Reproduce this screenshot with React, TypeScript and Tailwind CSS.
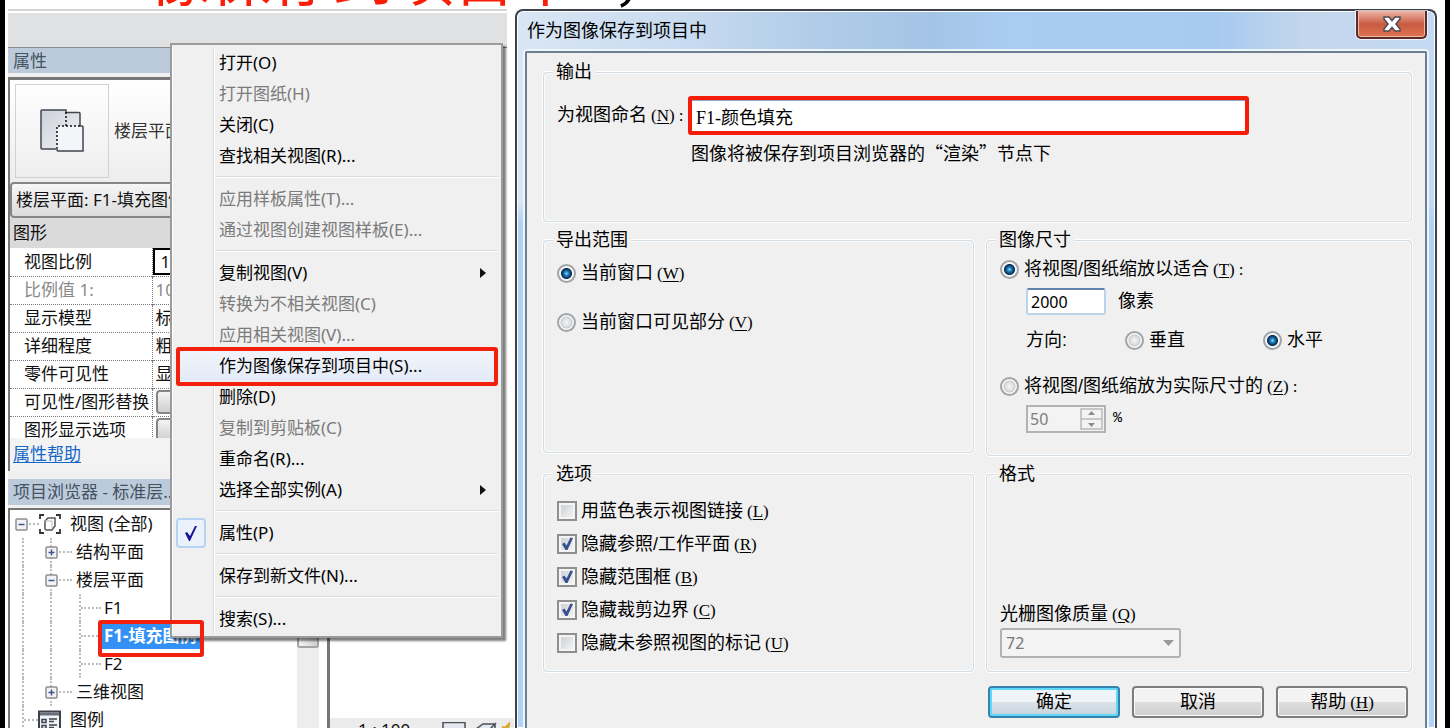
import { Fragment, type ReactNode } from "react";

type MenuEntry = {
  label: string;
  disabled?: boolean;
  submenu?: boolean;
  active?: boolean;
  checked?: boolean;
};

const menuGroups: MenuEntry[][] = [
  [
    { label: "打开(O)" },
    { label: "打开图纸(H)", disabled: true },
    { label: "关闭(C)" },
    { label: "查找相关视图(R)..." },
  ],
  [
    { label: "应用样板属性(T)...", disabled: true },
    { label: "通过视图创建视图样板(E)...", disabled: true },
  ],
  [
    { label: "复制视图(V)", submenu: true },
    { label: "转换为不相关视图(C)", disabled: true },
    { label: "应用相关视图(V)...", disabled: true },
    { label: "作为图像保存到项目中(S)...", active: true },
    { label: "删除(D)" },
    { label: "复制到剪贴板(C)", disabled: true },
    { label: "重命名(R)..." },
    { label: "选择全部实例(A)", submenu: true },
  ],
  [{ label: "属性(P)", checked: true }],
  [{ label: "保存到新文件(N)..." }],
  [{ label: "搜索(S)..." }],
];

const exportOptions = [
  { label: "用蓝色表示视图链接", hotkey: "L", checked: false },
  { label: "隐藏参照/工作平面", hotkey: "R", checked: true },
  { label: "隐藏范围框", hotkey: "B", checked: true },
  { label: "隐藏裁剪边界", hotkey: "C", checked: true },
  { label: "隐藏未参照视图的标记", hotkey: "U", checked: false },
];

const Key = ({ k, colon }: { k: string; colon?: boolean }) => (
  <span className="ml-1 font-['Liberation_Serif',serif] text-[17px] leading-none">
    (<span className="underline underline-offset-2">{k}</span>){colon && <span className="ml-1">:</span>}
  </span>
);

const Group = ({ title, className, children }: { title: string; className: string; children?: ReactNode }) => (
  <fieldset
    className={`min-w-0 rounded-[4px] border border-[#d3dce2] px-[13px] shadow-[0_0_0_1px_#fff,inset_0_0_0_1px_#f8fafb] ${className}`}
  >
    <legend className="-ml-1 bg-[#f0f0f0] px-[3px] leading-5">{title}</legend>
    {children}
  </fieldset>
);

const Radio = ({ name, checked, children }: { name: string; checked?: boolean; children: ReactNode }) => (
  <label className="flex h-5 items-center gap-[5px] leading-5">
    <input
      type="radio"
      name={name}
      defaultChecked={checked}
      className="size-[19px] shrink-0 appearance-none rounded-full border-2 border-[#a2a5a8] bg-[radial-gradient(circle_at_center,#f4f4f4_0,#dcdee0_40%,#c6c9cc_52%,#f8f8f8_60%)] checked:bg-[radial-gradient(circle_at_center,#8fe0fb_0,#2b8fcb_16%,#0b4a7e_36%,#12304e_48%,#f6f8fa_56%)]"
    />
    <span className="whitespace-nowrap">{children}</span>
  </label>
);

const CheckBox = ({ checked, children }: { checked: boolean; children: ReactNode }) => (
  <label className="relative flex h-5 items-center gap-1 leading-5">
    <input
      type="checkbox"
      defaultChecked={checked}
      className="peer size-5 shrink-0 appearance-none border-2 border-[#8e8f8f] bg-linear-to-br from-[#c9cdd2] to-[#f7f7f7] shadow-[inset_0_0_0_2px_#f4f4f4]"
    />
    <svg viewBox="0 0 20 20" className="absolute left-0 hidden size-5 peer-checked:block">
      <path d="M5 10 7.500 8.500l2 3L13.500 3.500l2.500.6L10.500 16H8.500z" fill="#38508f" />
    </svg>
    <span className="whitespace-nowrap">{children}</span>
  </label>
);

const PushButton = ({ primary, children }: { primary?: boolean; children: ReactNode }) => (
  <button
    type="button"
    className={`h-8 w-[132px] rounded-[4px] border-2 bg-linear-to-b text-center leading-5 ${
      primary
        ? "border-[#3583ad] from-[#eef4f8] from-50% via-[#dbe3ea] via-50% to-[#c6d3dd] shadow-[inset_0_0_0_2px_#5fd8fa]"
        : "border-[#7d7d7d] from-[#f3f3f3] from-50% via-[#dedede] via-50% to-[#cfcfcf] shadow-[inset_0_0_0_1px_#fbfbfb]"
    }`}
  >
    {children}
  </button>
);

const ViewIcon = () => (
  <svg viewBox="0 0 44 44" className="size-11" strokeWidth="1.5" stroke="#40454f">
    <defs>
      <linearGradient id="sheet" x1="0" y1="0" x2="1" y2="1">
        <stop offset="0" stopColor="#cdd0da" />
        <stop offset="1" stopColor="#f2f3f6" />
      </linearGradient>
    </defs>
    <path d="M1 1h25v3h14v13H27v23H1z" fill="url(#sheet)" stroke="none" />
    <path d="M16 40H2q-1 0-1-1V2q0-1 1-1h24v2.500h13q1 0 1 1V17" fill="none" />
    <path d="M17 17h25q1 0 1 1v23q0 1-1 1H18q-1 0-1-1z" fill="#f4f5f8" stroke="none" />
    <path d="M40 17h2q1 0 1 1v24H18q-1 0-1-1v-2" fill="none" />
    <path d="M26 3v14M40 17H17v22" fill="none" stroke="#111" strokeDasharray="2 2" />
  </svg>
);

const Expander = ({ open }: { open: boolean }) => (
  <svg viewBox="0 0 13 13" className="absolute top-2 -left-[7px] size-[13px]">
    <rect x="1" y="1" width="11" height="11" rx="1" fill="#f3f3f3" stroke="#8f8f8f" strokeWidth="1.500" />
    <path d={open ? "M3.500 6.500h6" : "M3.500 6.500h6M6.500 3.500v6"} stroke="#3b5494" strokeWidth="1.500" />
  </svg>
);

const Guide = ({ className }: { className: string }) => (
  <div className={`shrink-0 border-l-2 border-dotted border-[#bdbdbd] ${className}`} />
);

const Dash = () => <div className="mt-[13px] w-full border-t-2 border-dotted border-[#bdbdbd]" />;

const TreeGroup = ({ label, open }: { label: string; open: boolean }) => (
  <li className="flex h-7">
    <Guide className="w-7" />
    <div className="relative flex w-[22px] shrink-0 items-start border-l-2 border-dotted border-[#bdbdbd]">
      <Dash />
      <Expander open={open} />
    </div>
    <span className="pl-1">{label}</span>
  </li>
);

const TreeLeaf = ({ label, selected }: { label: string; selected?: boolean }) => (
  <li className="flex h-7 items-stretch">
    <Guide className="w-7" />
    <Guide className="w-[29px]" />
    <div className="flex w-[22px] shrink-0 items-start border-l-2 border-dotted border-[#bdbdbd]">
      <Dash />
    </div>
    {selected ? (
      <span className="my-px bg-[#3390f5] px-[3px] leading-[26px] font-bold whitespace-nowrap text-white">{label}</span>
    ) : (
      <span className="pl-[3px]">{label}</span>
    )}
  </li>
);

const PropertyRow = ({ name, muted, children }: { name: string; muted?: boolean; children: ReactNode }) => (
  <tr className={`h-7 border-b border-dotted border-[#777] ${muted ? "text-[#8a8a8a]" : ""}`}>
    <th scope="row" className="w-[142px] p-0 pl-[14px] text-left font-normal whitespace-nowrap">
      {name}
    </th>
    <td className="border-l border-dotted border-[#777] p-0 pl-[3px]">{children}</td>
  </tr>
);

const PropertiesPanel = () => (
  <section>
    <h2 className="h-[25px] bg-[#bccbdc] pl-[5px] leading-[25px] text-[#46525e]">属性</h2>
    <div className="mt-1 h-[394px] border-t-[3px] border-l-2 border-[#767676] bg-[#f3f3f3]">
      <div className="flex h-[102px] items-center bg-linear-to-b from-white to-[#ededee] pl-[5px]">
        <div className="flex size-[94px] items-center justify-center border border-[#d2d2d2]">
          <ViewIcon />
        </div>
        <span className="pl-[5px] whitespace-nowrap text-[#333]">楼层平面</span>
      </div>
      <select
        aria-label="视图实例"
        className="block h-[36px] w-full appearance-none rounded-[4px] border-2 border-[#858585] bg-linear-to-b from-[#f6f6f6] to-[#dcdcdc] pl-1"
      >
        <option>楼层平面: F1-填充图例</option>
      </select>
      <h3 className="h-[30px] bg-[#dadada] pl-[3px] leading-[30px]">图形</h3>
      <div className="h-[190px] overflow-hidden bg-white">
        <table className="w-full border-collapse leading-[26px]">
          <tbody>
            <PropertyRow name="视图比例">
              <div className="-ml-[3px] border-2 border-black pl-1.5 leading-[23px]">1 : 100</div>
            </PropertyRow>
            <PropertyRow name="比例值 1:" muted>
              100
            </PropertyRow>
            <PropertyRow name="显示模型">标准</PropertyRow>
            <PropertyRow name="详细程度">粗略</PropertyRow>
            <PropertyRow name="零件可见性">显示</PropertyRow>
            <PropertyRow name="可见性/图形替换">
              <button
                type="button"
                aria-label="编辑可见性"
                className="block h-6 w-full rounded-[4px] border-2 border-[#858585] bg-linear-to-b from-[#f4f4f4] to-[#cfcfcf]"
              />
            </PropertyRow>
            <PropertyRow name="图形显示选项">
              <button
                type="button"
                aria-label="编辑显示选项"
                className="block h-6 w-full rounded-[4px] border-2 border-[#858585] bg-linear-to-b from-[#f4f4f4] to-[#cfcfcf]"
              />
            </PropertyRow>
          </tbody>
        </table>
      </div>
      <a href="#help" className="ml-[3px] block leading-8 text-[#1467c9] underline underline-offset-2">
        属性帮助
      </a>
    </div>
  </section>
);

const ProjectBrowser = () => (
  <section className="flex min-h-0 flex-1 flex-col pt-2">
    <h2 className="h-[26px] shrink-0 bg-[#bccbdc] pl-[5px] leading-[26px] text-[#46525e]">项目浏览器 - 标准层...</h2>
    <div className="mt-[3px] flex min-h-0 flex-1 overflow-hidden border-t-2 border-l-2 border-[#767676] bg-white">
      <ul className="flex-1 pl-3 leading-7 whitespace-nowrap">
        <li className="flex h-7">
          <div className="relative flex w-[17px] shrink-0 items-start">
            <Dash />
            <Expander open />
          </div>
          <svg viewBox="0 0 22 22" className="mt-[3px] size-[22px]" fill="none" stroke="#333" strokeWidth="1.800">
            <path d="M1 6V2h4M17 2h4v4M21 16v4h-4M5 20H1v-4" />
            <path d="m6 8 3-3h7v8l-3 4H7l-1-1z" stroke="#555" strokeWidth="1.500" />
            <path d="M6 8h7v8" stroke="#bbb" strokeWidth="1" />
          </svg>
          <span className="pl-[9px]">视图 (全部)</span>
        </li>
        <TreeGroup label="结构平面" open={false} />
        <TreeGroup label="楼层平面" open />
        <TreeLeaf label="F1" />
        <TreeLeaf label="F1-填充图例" selected />
        <TreeLeaf label="F2" />
        <TreeGroup label="三维视图" open={false} />
        <li className="flex h-7">
          <div className="flex w-4 shrink-0 items-start border-l-2 border-dotted border-[#bdbdbd]">
            <Dash />
          </div>
          <svg viewBox="0 0 23 22" className="mt-1 size-[23px]">
            <rect x="1" y="1" width="21" height="20" fill="#f2f3f6" stroke="#3d424c" strokeWidth="2" />
            <path d="M2 2h19v3H2z" fill="#686e7a" />
            <path d="M4 9h4v3H4zM4 15h4v3H4z" fill="none" stroke="#3d424c" strokeWidth="1.500" />
            <path d="M11 8.500h8M11 11h5M11 14.500h8M11 17h5" stroke="#3d424c" strokeWidth="1.500" />
          </svg>
          <span className="pl-[9px]">图例</span>
        </li>
      </ul>
      <div className="mr-2 w-[22px] bg-[#ededed]">
        <div className="h-[138px] rounded-[3px] border-2 border-[#a5a5a5] bg-linear-to-r from-[#f4f4f4] to-[#d2d2d2]" />
      </div>
    </div>
  </section>
);

const ViewBar = () => (
  <div className="flex h-[10px] shrink-0 items-start overflow-hidden bg-[#ececec] pt-1 pl-7 leading-4">
    <span className="w-[84px]">1 : 100</span>
    <svg viewBox="0 0 72 20" className="h-5 w-[72px] shrink-0" fill="#e4e7ee" stroke="#4a4f5a" strokeWidth="1.500">
      <rect x="1" y="0.500" width="22" height="18" />
      <path d="m34 7 7-5h12l-5 5zM34 7h14v10H34zM48 7l5-5v10l-5 5" />
      <path d="m60 5 3 1 4-4-1 5 4 2" stroke="#d9a520" strokeWidth="2" fill="none" />
    </svg>
  </div>
);

const ContextMenu = () => (
  <div
    role="menu"
    className="absolute top-[43px] left-[170px] w-[333px] border-2 border-[#9b9b9b] bg-[#f0f0f0] py-[2px] shadow-[3px_3px_2px_#00000080]"
  >
    <div className="border-l border-white bg-[linear-gradient(to_right,transparent_40px,#dcdcdc_40px,#dcdcdc_41px,#fff_41px,#fff_42px,transparent_42px)] px-[3px]">
      {menuGroups.map((group, i) => (
        <Fragment key={group[0].label}>
          {i > 0 && <hr className="my-[5px] mr-0 ml-[39px] h-[2px] border-t border-b border-t-[#dcdcdc] border-b-white" />}
          {group.map((item) => (
            <button
              key={item.label}
              type="button"
              role="menuitem"
              disabled={item.disabled}
              className={`flex h-[31px] w-full items-center text-left ${item.disabled ? "text-[#7b7b7b]" : "text-black"} ${
                item.active ? "bg-linear-to-b from-[#f2f4f9] to-[#e3ebf8]" : ""
              }`}
            >
              <span className="w-[43px] shrink-0">
                {item.checked && (
                  <svg viewBox="0 0 30 30" className="size-[30px]">
                    <rect x="1" y="1" width="28" height="28" rx="3" fill="#ebf2fb" stroke="#b5d3f3" strokeWidth="2" />
                    <path d="m9 15 2-1 3 4 5-10h2l-7 15h-1z" fill="#15159c" />
                  </svg>
                )}
              </span>
              <span className="flex-1 whitespace-nowrap">{item.label}</span>
              {item.submenu && (
                <svg viewBox="0 0 6 10" className="mr-3 h-[10px] w-1.5">
                  <path d="M0 0v10l6-5z" fill="#111" />
                </svg>
              )}
            </button>
          ))}
        </Fragment>
      ))}
    </div>
  </div>
);

const TitleBar = () => (
  <div className="flex h-10 items-start justify-between pl-[10px]">
    <h1 className="leading-10">作为图像保存到项目中</h1>
    <button
      type="button"
      aria-label="关闭"
      className="mr-2 flex h-7 w-[71px] items-center justify-center rounded-b-[5px] border-2 border-t-0 border-[#5a2a28] bg-linear-to-b from-[#eab5a8] via-[#c95a43] via-50% to-[#dd7350] shadow-[0_0_0_1px_#ffffffb0,inset_0_0_0_1px_#f0b8a8]"
    >
      <svg viewBox="0 0 18 16" className="h-4 w-[18px]">
        <path
          d="M1 1h5l3 3.500L12 1h5v2l-4 5 4 5v2h-5l-3-3.500L6 15H1v-2l4-5-4-5z"
          fill="#fff"
          stroke="#4d4a55"
          strokeWidth="1.500"
        />
      </svg>
    </button>
  </div>
);

const SaveDialog = () => (
  <div
    role="dialog"
    aria-label="作为图像保存到项目中"
    className="mr-2 flex min-w-0 flex-1 flex-col rounded-t-[8px] border-2 border-b-0 border-[#3b424d] bg-[linear-gradient(to_bottom,transparent_190px,#b0d2f6_212px),linear-gradient(to_right,#d9e6f5_0,#c8dbf0_18%,#b2cce8_32%,#a4c4e6_45%,#a9cdf2_54%,#a6caf0_76%,#c3d6ec_86%,#c3daf2_100%)] font-['Liberation_Sans','Noto_Sans_CJK_SC',sans-serif] text-[18px] text-black shadow-[inset_0_0_0_1px_#fff]"
  >
    <TitleBar />
    <div className="mx-2 flex-1 rounded-t-[2px] border-2 border-b-0 border-[#6d7f90] bg-[#f0f0f0] pt-[9px] pr-[13px] pl-4 shadow-[0_0_0_2px_#edf5fd]">
      <form className="grid grid-cols-[430fr_425fr] items-start gap-x-3 gap-y-2">
        <Group title="输出" className="col-span-2 h-40">
          <div className="flex items-center pt-[14px]">
            <label htmlFor="view-name" className="w-[131px] shrink-0 whitespace-nowrap">
              为视图命名
              <Key k="N" colon />
            </label>
            <div className="max-w-[561px] flex-1 rounded-[3px] border-4 border-[#f51d08]">
              <input
                id="view-name"
                defaultValue="F1-颜色填充"
                className="block h-[31px] w-full border-t border-[#8fa9bb] bg-white px-1 font-['Liberation_Serif','Noto_Sans_CJK_SC',serif]"
              />
            </div>
          </div>
          <p className="pt-[7px] pl-[134px] font-['Noto_Sans_CJK_SC',sans-serif] leading-5" lang="zh-CN">
            图像将被保存到项目浏览器的“渲染”节点下
          </p>
        </Group>

        <Group title="导出范围" className="h-[223px]">
          <div className="flex flex-col gap-[29px] pt-[13px]">
            <Radio name="range" checked>
              当前窗口
              <Key k="W" />
            </Radio>
            <Radio name="range">
              当前窗口可见部分
              <Key k="V" />
            </Radio>
          </div>
        </Group>

        <Group title="图像尺寸" className="h-[226px]">
          <div className="pt-[9px]">
            <Radio name="scale" checked>
              将视图/图纸缩放以适合
              <Key k="T" colon />
            </Radio>
            <div className="flex h-9 items-end gap-3 pl-[26px]">
              <input
                id="pixels"
                defaultValue="2000"
                className="h-[27px] w-20 rounded-[3px] border-2 border-[#b9d3ea] border-t-[#5f83ab] bg-white px-[3px] font-['Noto_Sans',sans-serif] text-[16px]"
              />
              <label htmlFor="pixels">像素</label>
            </div>
            <div className="flex items-center pt-[15px] pl-[26px]" role="radiogroup" aria-label="方向">
              <span className="w-[99px] shrink-0 leading-5">方向:</span>
              <div className="w-[138px] shrink-0">
                <Radio name="direction">垂直</Radio>
              </div>
              <Radio name="direction" checked>
                水平
              </Radio>
            </div>
            <div className="pt-[26px]">
              <Radio name="scale">
                将视图/图纸缩放为实际尺寸的
                <Key k="Z" colon />
              </Radio>
            </div>
            <div className="flex items-center gap-[7px] pt-[9px] pl-[26px]">
              <div className="flex h-7 w-20 border-2 border-[#b3b3b3] bg-[#f3f3f3] p-px">
                <input
                  id="percent"
                  defaultValue="50"
                  disabled
                  className="min-w-0 flex-1 px-px font-['Noto_Sans',sans-serif] text-[16px] text-[#7c7c7c]"
                />
                <svg viewBox="0 0 23 22" className="h-[22px] w-[23px]" fill="none" stroke="#b9b9b9" strokeWidth="1.500">
                  <path d="M1 1h21v20H1zM1 11h21" />
                  <path d="m8 7 3.500-4L15 7zM8 15l3.500 4 3.500-4z" fill="#8c8c8c" stroke="none" />
                </svg>
              </div>
              <label htmlFor="percent" className="font-['Liberation_Mono',monospace] text-[15px]">
                %
              </label>
            </div>
          </div>
        </Group>

        <Group title="选项" className="h-[208px]">
          <div className="flex flex-col gap-[13px] pt-[17px]">
            {exportOptions.map((o) => (
              <CheckBox key={o.hotkey} checked={o.checked}>
                {o.label}
                <Key k={o.hotkey} />
              </CheckBox>
            ))}
          </div>
        </Group>

        <Group title="格式" className="h-[208px]">
          <div className="flex h-[187px] flex-col justify-end pb-[13px]">
            <label htmlFor="quality" className="h-6 leading-5">
              光栅图像质量
              <Key k="Q" />
            </label>
            <div className="relative w-[181px]">
              <select
                id="quality"
                disabled
                className="block h-[30px] w-full appearance-none rounded-[3px] border-2 border-[#b0b3b5] bg-[#f4f4f4] pl-1 font-['Noto_Sans',sans-serif] text-[16px] text-[#777] opacity-100"
              >
                <option>72</option>
              </select>
              <svg viewBox="0 0 11 6" className="absolute top-3 right-[7px] h-1.5 w-[11px]">
                <path d="M0 0h11L5.500 6z" fill="#9a9a9a" />
              </svg>
            </div>
          </div>
        </Group>
      </form>
      <div className="flex justify-end gap-3 pt-[14px] pr-1">
        <PushButton primary>确定</PushButton>
        <PushButton>取消</PushButton>
        <PushButton>
          帮助
          <Key k="H" />
        </PushButton>
      </div>
    </div>
  </div>
);

export default function App() {
  return (
    <div className="relative flex h-screen overflow-hidden bg-white font-['Noto_Sans','Noto_Sans_CJK_SC',sans-serif] text-[17px] text-[#111]">
      <div className="w-[5px] shrink-0 bg-black" />
      <main className="flex min-w-0 flex-1 flex-col">
        <div className="flex h-[9px] shrink-0 items-end overflow-hidden pb-1 pl-36 font-['Noto_Sans_CJK_SC',sans-serif] text-[61px] leading-none whitespace-nowrap text-[#fb1d07]">
          像保存到项目中<span className="pl-9 text-black">，</span>
        </div>
        <div className="flex min-h-0 flex-1">
          <div className="mr-2 flex w-[502px] shrink-0 flex-col pl-[3px]">
            <div className="h-[38px] shrink-0 border-t-2 border-[#d4d4d4] bg-[#e0e1e3] shadow-[inset_0_2px_0_#fff]" />
            <div className="flex min-h-0 flex-1 border-t border-[#8b8b8b] bg-[#f0f0f0]">
              <div className="flex w-[319px] shrink-0 flex-col">
                <PropertiesPanel />
                <ProjectBrowser />
              </div>
              <div className="flex flex-1 flex-col border-l-[3px] border-[#767676] bg-white">
                <div className="flex-1" />
                <ViewBar />
              </div>
            </div>
          </div>
          <SaveDialog />
        </div>
      </main>
      <div className="w-[5px] shrink-0 bg-black" />

      <ContextMenu />
      {/* red call-outs */}
      <div className="pointer-events-none absolute top-[347px] left-[176px] h-[39px] w-[322px] rounded-[3px] border-4 border-[#f3200d]" />
      <div className="pointer-events-none absolute top-[620px] left-[98px] h-[37px] w-[106px] rounded-[3px] border-4 border-[#f3200d]" />
    </div>
  );
}
